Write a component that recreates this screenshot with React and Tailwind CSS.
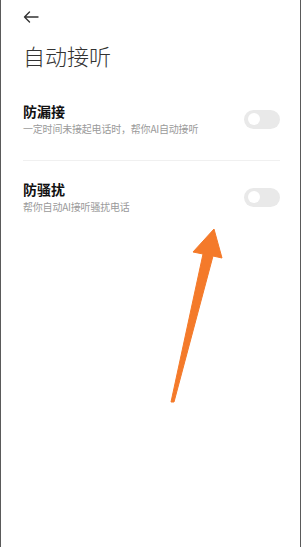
import React from 'react'

function Toggle() {
  return (
    <div className="w-[36px] h-[19px] rounded-full bg-[#e9e9e9] flex items-center px-[4px] shrink-0">
      <div className="w-[12px] h-[12px] rounded-full bg-white" />
    </div>
  )
}

function Row({ title, desc }) {
  return (
    <div className="flex items-center justify-between">
      <div className="flex flex-col">
        <span className="text-[14px] leading-[18px] font-bold text-[#111]">{title}</span>
        <span className="text-[10px] leading-[14px] text-[#9a9a9a] mt-[2px] tracking-[-0.2px]">{desc}</span>
      </div>
      <Toggle />
    </div>
  )
}

export default function App() {
  return (
    <div
      className="relative w-[301px] h-[547px] bg-white border-l border-r border-[#5a5a5a] overflow-hidden"
      style={{ fontFamily: '"Noto Sans CJK SC", "Noto Sans", sans-serif' }}
    >
      <div className="pl-[22px] pr-[20px]">
        <div className="pt-[11px] h-[26px]">
          <svg width="16" height="12" viewBox="0 0 16 12" fill="none" stroke="#333" strokeWidth="1.4" strokeLinecap="round" strokeLinejoin="round">
            <path d="M15 6H1.5M6.5 1L1.5 6l5 5" />
          </svg>
        </div>
        <h1 className="mt-[15px] text-[22px] leading-[28px] font-light text-[#333]">自动接听</h1>
        <div className="mt-[33px]">
          <Row title="防漏接" desc="一定时间未接起电话时，帮你AI自动接听" />
        </div>
        <div className="mt-[24px] h-px bg-[#f0f0f0]" />
        <div className="mt-[19px]">
          <Row title="防骚扰" desc="帮你自动AI接听骚扰电话" />
        </div>
      </div>
      <svg className="absolute left-0 top-0" width="301" height="547" viewBox="0 0 301 547">
        <path d="M213 229 L221 258 L212 256 L173 402 L170 402 L202 254 L192 252 Z" fill="#f47a2a" stroke="#f47a2a" strokeWidth="1" strokeLinejoin="round" />
      </svg>
    </div>
  )
}
